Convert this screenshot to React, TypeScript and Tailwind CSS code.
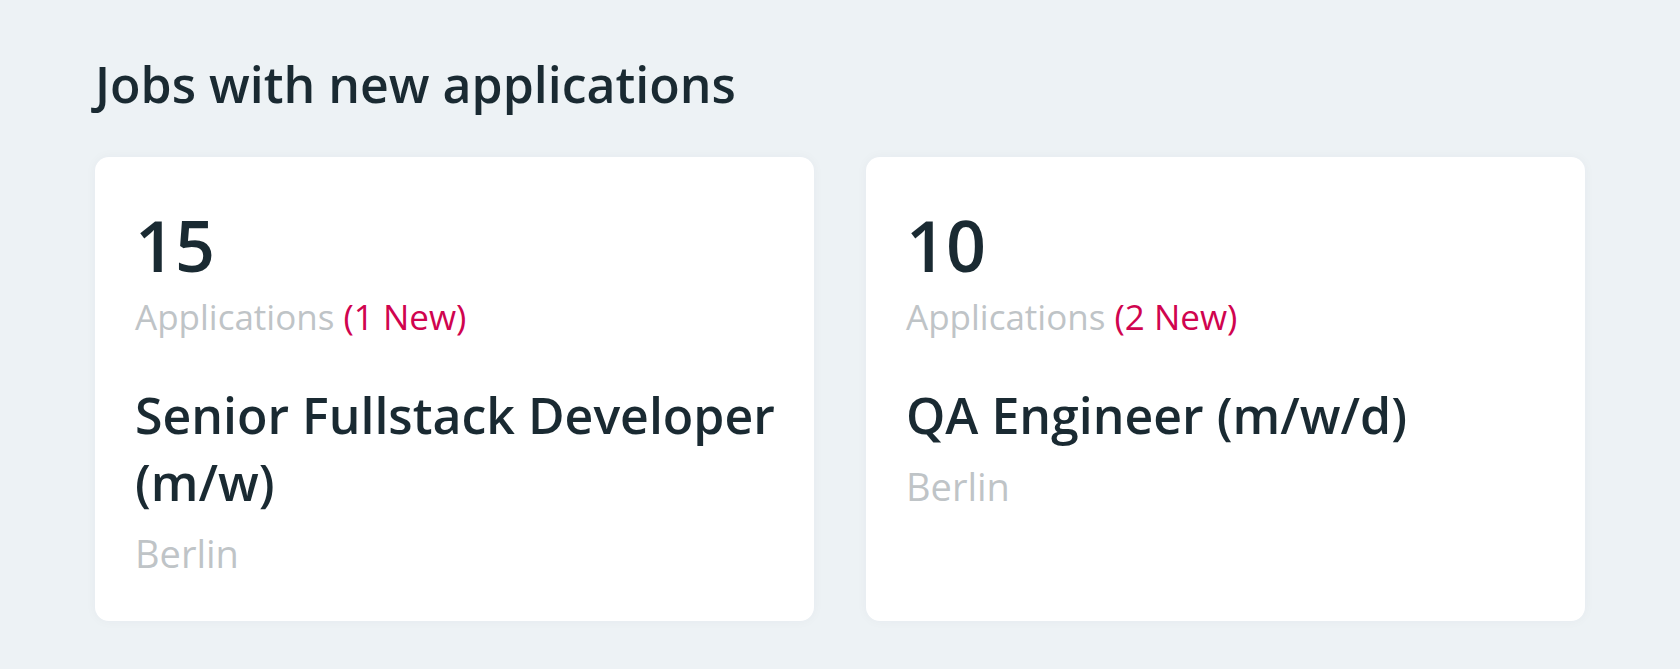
const jobs = [
  { count: 15, newCount: 1, title: "Senior Fullstack Developer (m/w)", city: "Berlin" },
  { count: 10, newCount: 2, title: "QA Engineer (m/w/d)", city: "Berlin" },
];

export default function App() {
  return (
    <div
      className="min-h-screen bg-[#edf2f5] px-[95px] pt-[51px] pb-12"
      style={{ fontFamily: '"Open Sans", "Noto Sans", sans-serif' }}
    >
      <h2 className="text-[50px] leading-[66px] font-semibold text-[#1a2a32]">
        Jobs with new applications
      </h2>
      <div className="mt-[40px] grid grid-cols-2 gap-[52px]">
        {jobs.map((job) => (
          <div
            key={job.title}
            className="rounded-[14px] bg-white pl-10 pr-[28px] pt-[45px] pb-[42px] shadow-[0_0_12px_rgba(30,50,70,0.04)]"
          >
            <p className="text-[70px] leading-[86px] font-semibold text-[#1a2a32]">
              {job.count}
            </p>
            <p className="text-[35px] leading-[58px] font-normal text-[#bfc4c7]">
              Applications{" "}
              <span className="text-[#d0044f]">({job.newCount} New)</span>
            </p>
            <h3 className="mt-[36px] text-[50px] leading-[67px] font-semibold text-[#1a2a32]">
              {job.title}
            </h3>
            <p className="mt-[11px] text-[38px] leading-[52px] font-normal text-[#bfc4c7]">
              {job.city}
            </p>
          </div>
        ))}
      </div>
    </div>
  );
}
